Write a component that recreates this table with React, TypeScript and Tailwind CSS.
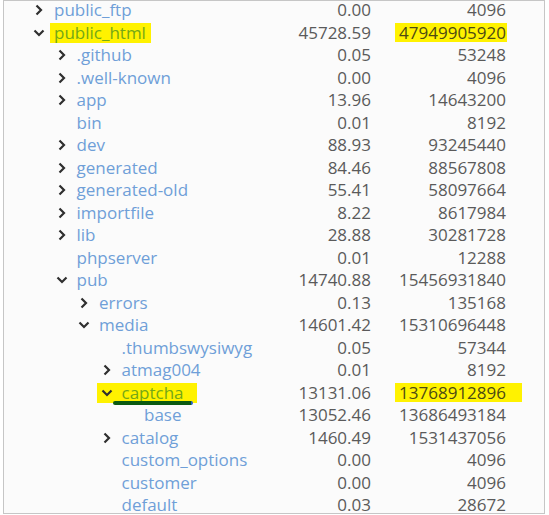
import React from "react";

type Row = {
	name: string;
	level: number;
	icon?: "right" | "down";
	mb: string;
	bytes: string;
	mark?: "top" | "captcha";
};

const rows: Row[] = [
	{ name: "public_ftp", level: 0, icon: "right", mb: "0.00", bytes: "4096" },
	{ name: "public_html", level: 0, icon: "down", mb: "45728.59", bytes: "47949905920", mark: "top" },
	{ name: ".github", level: 1, icon: "right", mb: "0.05", bytes: "53248" },
	{ name: ".well-known", level: 1, icon: "right", mb: "0.00", bytes: "4096" },
	{ name: "app", level: 1, icon: "right", mb: "13.96", bytes: "14643200" },
	{ name: "bin", level: 1, mb: "0.01", bytes: "8192" },
	{ name: "dev", level: 1, icon: "right", mb: "88.93", bytes: "93245440" },
	{ name: "generated", level: 1, icon: "right", mb: "84.46", bytes: "88567808" },
	{ name: "generated-old", level: 1, icon: "right", mb: "55.41", bytes: "58097664" },
	{ name: "importfile", level: 1, icon: "right", mb: "8.22", bytes: "8617984" },
	{ name: "lib", level: 1, icon: "right", mb: "28.88", bytes: "30281728" },
	{ name: "phpserver", level: 1, mb: "0.01", bytes: "12288" },
	{ name: "pub", level: 1, icon: "down", mb: "14740.88", bytes: "15456931840" },
	{ name: "errors", level: 2, icon: "right", mb: "0.13", bytes: "135168" },
	{ name: "media", level: 2, icon: "down", mb: "14601.42", bytes: "15310696448" },
	{ name: ".thumbswysiwyg", level: 3, mb: "0.05", bytes: "57344" },
	{ name: "atmag004", level: 3, icon: "right", mb: "0.01", bytes: "8192" },
	{ name: "captcha", level: 3, icon: "down", mb: "13131.06", bytes: "13768912896", mark: "captcha" },
	{ name: "base", level: 4, mb: "13052.46", bytes: "13686493184" },
	{ name: "catalog", level: 3, icon: "right", mb: "1460.49", bytes: "1531437056" },
	{ name: "custom_options", level: 3, mb: "0.00", bytes: "4096" },
	{ name: "customer", level: 3, mb: "0.00", bytes: "4096" },
	{ name: "default", level: 3, mb: "0.03", bytes: "28672" },
];

const indents = ["pl-[25px]", "pl-[47.5px]", "pl-[70px]", "pl-[92.5px]", "pl-[115px]"];

const Chevron = ({ dir }: { dir: "right" | "down" }) => (
	<svg width="12" height="12" viewBox="0 0 12 12" className="block">
		{dir === "right" ? (
			<polyline points="3.5,1.5 8,6 3.5,10.5" fill="none" stroke="#2f2f2f" strokeWidth="2.2" />
		) : (
			<polyline points="1.5,3.5 6,8 10.5,3.5" fill="none" stroke="#2f2f2f" strokeWidth="2.2" />
		)}
	</svg>
);

const App = () => {
	return (
		<div className="w-[549px] h-[515px] bg-white overflow-hidden">
			<div
				className="ml-[3px] w-[542px] h-[514px] border border-[#c6c6c6] bg-[#fbfbfb] overflow-hidden text-[17px]"
				style={{ fontFamily: '"Open Sans", "Noto Sans", sans-serif' }}
			>
				<div className="-mt-[2px]">
					{rows.map((row) => (
						<div key={row.name} className="flex h-[22.5px] leading-[22.5px] items-center">
							<div className={`w-[267px] shrink-0 flex items-center ${indents[row.level]}`}>
								{row.mark === "captcha" ? (
									<div className="relative flex items-center bg-[#fff200] h-[20px] pr-[13px]">
										<div className="w-[20px] flex justify-center">
											{row.icon && <Chevron dir={row.icon} />}
										</div>
										<span className="ml-[5px] text-[#74a817]">{row.name}</span>
										<div className="absolute left-[16px] right-[4px] bottom-[-2px] h-[4px] rounded-full bg-[#0b5a12] border-r-2 border-[#2860c8]" />
									</div>
								) : (
									<>
										<div className="w-[20px] flex justify-center">
											{row.icon && <Chevron dir={row.icon} />}
										</div>
										{row.mark === "top" ? (
											<span className="ml-[1px] pl-[4px] pr-[5px] bg-[#fff200] h-[20px] leading-[20px] text-[#74a817]">
												{row.name}
											</span>
										) : (
											<span className="ml-[5px] text-[#6f9fd8] whitespace-nowrap">{row.name}</span>
										)}
									</>
								)}
							</div>
							<div className="w-[100px] shrink-0 text-right text-[#5a5a5a]">{row.mb}</div>
							<div className="w-[135px] shrink-0 flex justify-end">
								{row.mark ? (
									<span
										className={`bg-[#fff200] h-[19px] leading-[19px] text-[#4d4a14] pl-[4px] ${
											row.mark === "captcha" ? "pr-[16px] -mr-[16px]" : "pr-[1px] -mr-[1px]"
										}`}
									>
										{row.bytes}
									</span>
								) : (
									<span className="text-[#5a5a5a]">{row.bytes}</span>
								)}
							</div>
							<div className="flex-1" />
						</div>
					))}
				</div>
			</div>
		</div>
	);
};

export default App;
